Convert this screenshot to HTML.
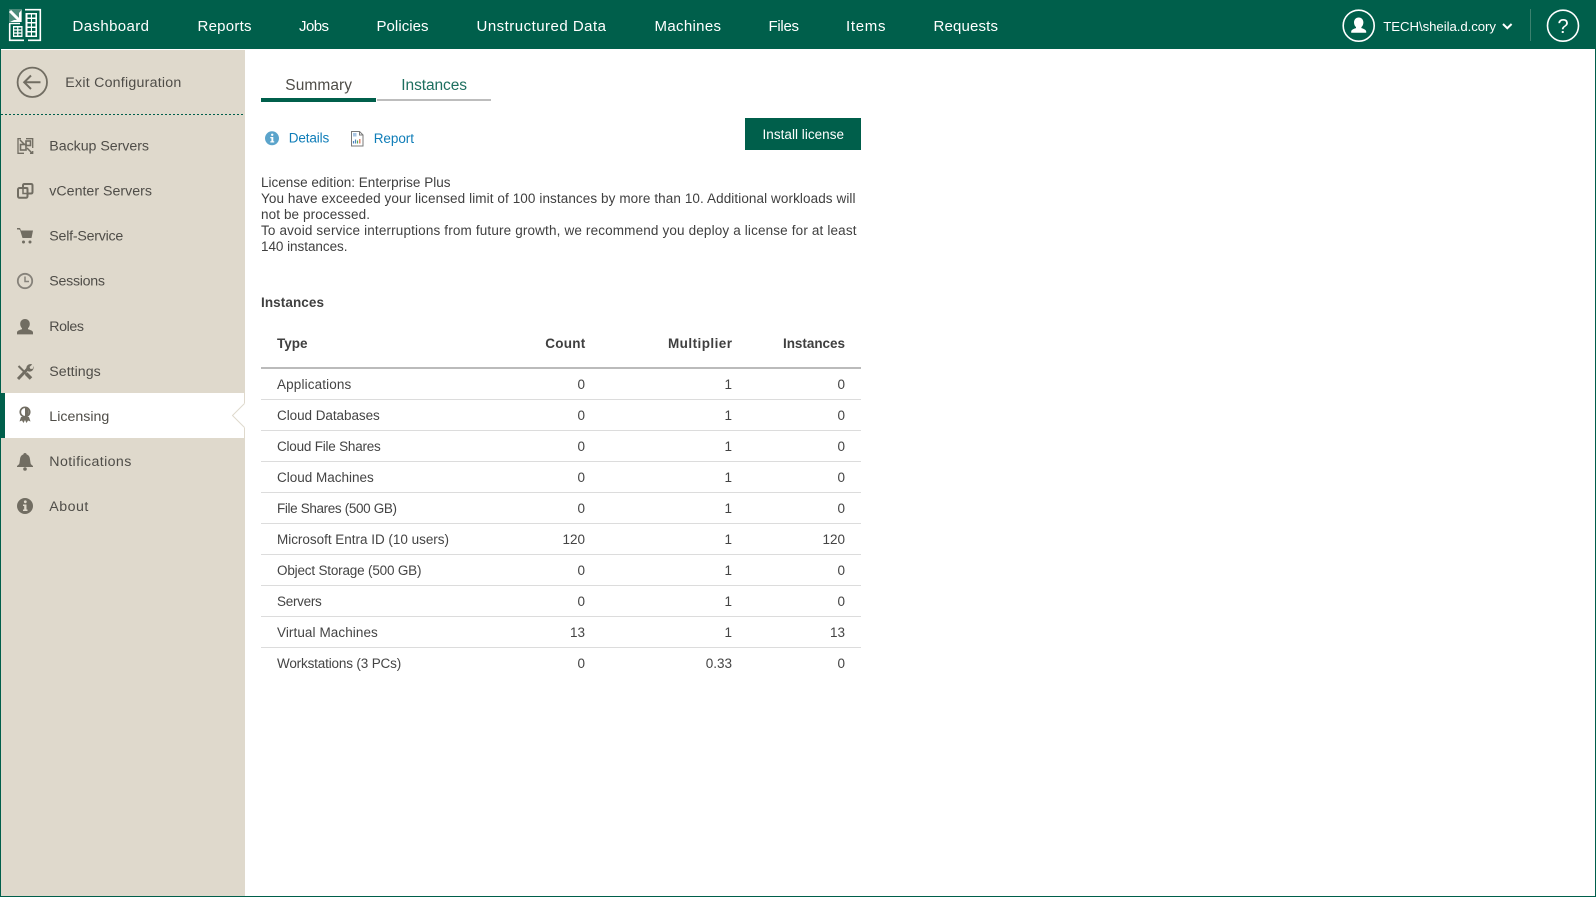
<!DOCTYPE html>
<html lang="en">
<head>
<meta charset="utf-8">
<title>Licensing</title>
<style>
html,body{margin:0;padding:0;width:1596px;height:897px;overflow:hidden;background:#fff}
svg{display:block;position:absolute;left:0;top:0}
text{font-family:"Liberation Sans",Arial,sans-serif;white-space:pre}
.nav{font-size:15px;fill:#fff}
.side{font-size:14.2px;fill:#4f4d48}
.tab{font-size:15.5px}
.lnk{font-size:13.5px;fill:#0f7db8}
.p{font-size:13.5px;fill:#3f3f3f}
.b{font-size:13.5px;font-weight:bold;fill:#3f3f3f}
.c{font-size:13.5px;fill:#444}
.n{font-size:13.5px;fill:#444;text-anchor:end}
.ic{fill:#716d62}
</style>
</head>
<body>
<svg width="1596" height="897" viewBox="0 0 1596 897" xmlns="http://www.w3.org/2000/svg">
<rect width="1596" height="897" fill="#fff"/>
<!-- frame -->
<rect x="0" y="0" width="1596" height="49" fill="#005f4b"/>
<rect x="0" y="49" width="1" height="848" fill="#005f4b"/>
<rect x="1595" y="49" width="1" height="848" fill="#005f4b"/>
<rect x="0" y="896" width="1596" height="1" fill="#005f4b"/>
<!-- sidebar -->
<rect x="1" y="50" width="244" height="846" fill="#dfd9cc"/>
<line x1="1" y1="114.5" x2="245" y2="114.5" stroke="#005f4b" stroke-width="1" stroke-dasharray="2 2"/>
<rect x="0" y="393" width="5" height="45" fill="#005f4b"/>
<rect x="5" y="393" width="239" height="45" fill="#fff"/>
<polygon points="245,403 232.5,415.5 245,428" fill="#fff"/>
<polyline points="244.5,403.5 232.5,415.5 244.5,427.5" fill="none" stroke="#dfd9cc" stroke-width="1"/>

<!-- logo -->
<g>
<rect x="9" y="9" width="13" height="13" fill="#4c8b7b"/>
<path d="M10 11 L19 20" stroke="#fff" stroke-width="3" fill="none"/>
<path d="M21.500 10 V22 H10 L14 20 H19 V13 Z" fill="#fff"/>
<path d="M25 9.7 H40.300 V40.300 H28 M9.700 24 V40.300 H24" fill="none" stroke="#fff" stroke-width="1.600"/>
<path d="M9 23.500 H20" stroke="#fff" stroke-width="1.400"/>
<rect x="25.500" y="13" width="11.500" height="24" fill="#fff"/>
<g fill="#005f4b">
<rect x="27.500" y="14.500" width="3.400" height="3"/><rect x="32" y="14.500" width="3.400" height="3"/>
<rect x="27.500" y="19" width="3.400" height="3"/><rect x="32" y="19" width="3.400" height="3"/>
<rect x="27.500" y="23.500" width="3.400" height="3"/><rect x="32" y="23.500" width="3.400" height="3"/>
<rect x="27.500" y="28" width="3.400" height="3"/><rect x="32" y="28" width="3.400" height="3"/>
<rect x="27.500" y="32.500" width="3.400" height="3"/><rect x="32" y="32.500" width="3.400" height="3"/>
</g>
<rect x="13" y="26" width="9.500" height="11" fill="#fff"/>
<g fill="#005f4b">
<rect x="14.200" y="27.500" width="2.900" height="1.800"/><rect x="18.400" y="27.500" width="2.900" height="1.800"/>
<rect x="14.200" y="30.600" width="2.900" height="1.800"/><rect x="18.400" y="30.600" width="2.900" height="1.800"/>
<rect x="14.200" y="33.700" width="2.900" height="1.800"/><rect x="18.400" y="33.700" width="2.900" height="1.800"/>
</g>
</g>

<!-- top navigation -->
<text class="nav" x="72.500" y="31" textLength="76.500">Dashboard</text>
<text class="nav" x="197.500" y="31" textLength="54">Reports</text>
<text class="nav" x="299" y="31" textLength="30">Jobs</text>
<text class="nav" x="376.500" y="31" textLength="52">Policies</text>
<text class="nav" x="476.500" y="31" textLength="129.500">Unstructured Data</text>
<text class="nav" x="654.500" y="31" textLength="66.500">Machines</text>
<text class="nav" x="768.500" y="31" textLength="30.500">Files</text>
<text class="nav" x="846" y="31" textLength="39.500">Items</text>
<text class="nav" x="933.500" y="31" textLength="64.500">Requests</text>

<!-- user -->
<circle cx="1358.700" cy="25.700" r="15.500" fill="none" stroke="#fff" stroke-width="1.600"/>
<path d="M1358.700 17.500 c-3 0 -4.700 2.300 -4.700 5 c0 2 .9 3.700 2 4.600 v1 c-2.600 .8 -4.800 1.800 -4.800 3.400 v1.300 h15 v-1.300 c0 -1.600 -2.200 -2.600 -4.800 -3.400 v-1 c1.100 -.9 2 -2.600 2 -4.600 c0 -2.700 -1.700 -5 -4.700 -5z" fill="#fff"/>
<text x="1383.300" y="31" font-size="13.200" fill="#fff" textLength="112.700">TECH\sheila.d.cory</text>
<path d="M1503 24 L1507.300 28.200 L1511.600 24" fill="none" stroke="#fff" stroke-width="2"/>
<rect x="1530" y="9" width="1" height="32" fill="#3c826f"/>
<circle cx="1563" cy="25.700" r="15.500" fill="none" stroke="#fff" stroke-width="1.600"/>
<text x="1563" y="33" font-size="20" fill="#fff" text-anchor="middle">?</text>

<!-- exit -->
<circle cx="32.300" cy="82.300" r="14.700" fill="none" stroke="#716d62" stroke-width="1.800"/>
<path d="M40.500 82.300 H24.500 M31 75.500 L24.200 82.300 L31 89" fill="none" stroke="#716d62" stroke-width="2"/>
<text class="side" x="65.300" y="87" textLength="116">Exit Configuration</text>

<!-- sidebar items -->
<text class="side" x="49.300" y="150.700" textLength="99.700">Backup Servers</text>
<text class="side" x="49.300" y="195.700" textLength="102.700">vCenter Servers</text>
<text class="side" x="49.300" y="240.700" textLength="74">Self-Service</text>
<text class="side" x="49.300" y="285.700" textLength="55.700">Sessions</text>
<text class="side" x="49.300" y="331" textLength="34.700">Roles</text>
<text class="side" x="49.300" y="376" textLength="51.400">Settings</text>
<text class="side" x="49.300" y="421" textLength="60">Licensing</text>
<text class="side" x="49.300" y="466" textLength="82">Notifications</text>
<text class="side" x="49.300" y="511" textLength="39">About</text>

<!-- backup servers icon -->
<g fill="none" stroke="#716d62" stroke-width="1.300">
<path d="M21 138.700 H18 V153.300 H24 M26 138.700 H32.700 V148 M32.700 151 V153.300 H30"/>
<rect x="20.500" y="144.500" width="5.500" height="5.500" stroke-width="1.600"/>
<rect x="26" y="141" width="4.500" height="4.500" stroke-width="1.600"/>
<path d="M20 140 L24.500 144.500 M27 148 L32 153" stroke-width="1.500"/>
</g>
<!-- vcenter icon -->
<g fill="none" stroke="#716d62" stroke-width="2">
<path d="M23 188 V185.500 Q23 184 24.500 184 H31 Q32.500 184 32.500 185.500 V192 Q32.500 193.500 31 193.500 H28"/>
<rect x="18" y="188" width="9.500" height="9.800" rx="1.500"/>
<rect x="23" y="188" width="4.500" height="5.500" stroke-width="1.500"/>
</g>
<!-- cart -->
<path class="ic" d="M17 228 H20 L21 230.500 H33 L31.500 238 H22.500 L20 230 L19 229.500 H17 Z"/>
<circle class="ic" cx="23.500" cy="242" r="1.500"/><circle class="ic" cx="30" cy="242" r="1.500"/>
<!-- clock -->
<circle cx="25" cy="281" r="7.200" fill="none" stroke="#86827a" stroke-width="1.800"/>
<path d="M25 276.500 V281.500 H29" fill="none" stroke="#86827a" stroke-width="1.500"/>
<!-- roles -->
<path class="ic" d="M25 319 c-3 0 -4.800 2.200 -4.800 5 c0 1.900 .9 3.400 1.800 4.300 v.9 c-2.800 .8 -5 1.600 -5 3.200 v2 h16 v-2 c0 -1.600 -2.200 -2.400 -5 -3.200 v-.9 c.9 -.9 1.800 -2.400 1.800 -4.300 c0 -2.800 -1.800 -5 -4.800 -5z"/>
<!-- settings -->
<path d="M18.500 366 L26 373.500" stroke="#716d62" stroke-width="2" fill="none"/>
<path d="M26 373.500 L31 378.500" stroke="#716d62" stroke-width="3.600" fill="none"/>
<path d="M18 379 L28 368.500" stroke="#716d62" stroke-width="3" fill="none"/>
<path class="ic" d="M26.500 369.500 C25.800 366 28 364 31 364 L32.200 364.500 L29.500 367 L30.500 369 L32.800 368.800 L33.500 366 C34.300 369 32 372.500 28.500 371.500 Z"/>
<!-- licensing -->
<circle cx="25" cy="412" r="4.700" fill="#fff" stroke="#716d62" stroke-width="1.700"/>
<path class="ic" d="M25 407.500 A4.700 4.700 0 0 1 25 416.700 Z"/>
<path class="ic" d="M21 417 H29 L30.500 421.500 L28 420.500 L26.500 423 L25 420 L23.500 423 L22 420.500 L19.500 421.500 Z"/>
<!-- bell -->
<path class="ic" d="M25 453 c1 0 1.600 .6 1.600 1.400 c2.200 .7 3.200 2.600 3.400 5 l.6 4 c.2 1.200 1.400 1.600 2.400 2.600 v1 h-16 v-1 c1 -1 2.200 -1.400 2.400 -2.600 l.6 -4 c.2 -2.400 1.200 -4.300 3.400 -5 c0 -.8 .6 -1.400 1.600 -1.400z"/>
<circle class="ic" cx="25" cy="469" r="1.800"/>
<!-- about -->
<circle class="ic" cx="25" cy="506" r="8"/>
<circle cx="25.300" cy="501.800" r="1.400" fill="#dfd9cc"/>
<path d="M23 504.500 H26.500 V509.500 H27.500 V511 H23 V509.500 H24.200 V506 H23 Z" fill="#dfd9cc"/>

<!-- tabs -->
<text class="tab" x="285.300" y="90" fill="#4f4d48" textLength="66.700">Summary</text>
<text class="tab" x="401.300" y="90" fill="#1d6f5f" textLength="65.700">Instances</text>
<rect x="261" y="98" width="115" height="4" fill="#005f4b"/>
<rect x="377" y="99" width="114" height="2" fill="#bdbdbd"/>

<!-- details / report -->
<circle cx="272" cy="138.300" r="7" fill="#5ba4cb"/>
<circle cx="272.200" cy="134.800" r="1.200" fill="#fff"/>
<path d="M270.300 137 H273.300 V141.300 H274.200 V142.500 H270.300 V141.300 H271.400 V138.200 H270.300 Z" fill="#fff"/>
<text class="lnk" x="288.700" y="142.700" textLength="40.600">Details</text>
<path d="M351.500 131.500 H359.500 L363 135 V146 H351.500 Z M359.500 131.500 V135 H363" fill="#fff" stroke="#7a7a7a" stroke-width="1"/>
<rect x="353" y="133" width="3.500" height="3.500" fill="#a9c5e3"/>
<path d="M353.500 143.500 V141 M355.500 143.500 V139.500" stroke="#4d84bd" stroke-width="1.200"/>
<path d="M357.500 143.500 V140.500" stroke="#5aa85a" stroke-width="1.200"/>
<path d="M359.800 143.500 V139" stroke="#d9694a" stroke-width="1.200"/>
<text class="lnk" x="373.700" y="143" textLength="40.300">Report</text>

<!-- button -->
<rect x="745" y="118" width="116" height="32" fill="#005f4b"/>
<text x="762.500" y="139" font-size="13.500" fill="#fff" textLength="81.500">Install license</text>

<!-- paragraph -->
<text class="p" x="261" y="187" textLength="189.500">License edition: Enterprise Plus</text>
<text class="p" x="261" y="203" textLength="594.500">You have exceeded your licensed limit of 100 instances by more than 10. Additional workloads will</text>
<text class="p" x="261" y="219" textLength="109">not be processed.</text>
<text class="p" x="261" y="235" textLength="595.500">To avoid service interruptions from future growth, we recommend you deploy a license for at least</text>
<text class="p" x="261" y="251" textLength="86.500">140 instances.</text>

<text class="b" x="261" y="307" textLength="63">Instances</text>

<!-- table head -->
<text class="b" x="277" y="348" textLength="30.500">Type</text>
<text class="b" x="545.300" y="348" textLength="40">Count</text>
<text class="b" x="668" y="348" textLength="64">Multiplier</text>
<text class="b" x="783" y="348" textLength="62">Instances</text>
<rect x="261" y="367" width="600" height="2" fill="#bbb"/>

<!-- separators -->
<g fill="#dcdcdc">
<rect x="261" y="399" width="600" height="1"/>
<rect x="261" y="430" width="600" height="1"/>
<rect x="261" y="461" width="600" height="1"/>
<rect x="261" y="492" width="600" height="1"/>
<rect x="261" y="523" width="600" height="1"/>
<rect x="261" y="554" width="600" height="1"/>
<rect x="261" y="585" width="600" height="1"/>
<rect x="261" y="616" width="600" height="1"/>
<rect x="261" y="647" width="600" height="1"/>
</g>

<!-- rows -->
<text class="c" x="277" y="389" textLength="74.300">Applications</text>
<text class="n" x="585" y="389">0</text><text class="n" x="732" y="389">1</text><text class="n" x="845" y="389">0</text>
<text class="c" x="277" y="420" textLength="102.800">Cloud Databases</text>
<text class="n" x="585" y="420">0</text><text class="n" x="732" y="420">1</text><text class="n" x="845" y="420">0</text>
<text class="c" x="277" y="451" textLength="103.800">Cloud File Shares</text>
<text class="n" x="585" y="451">0</text><text class="n" x="732" y="451">1</text><text class="n" x="845" y="451">0</text>
<text class="c" x="277" y="482" textLength="96.700">Cloud Machines</text>
<text class="n" x="585" y="482">0</text><text class="n" x="732" y="482">1</text><text class="n" x="845" y="482">0</text>
<text class="c" x="277" y="513" textLength="120">File Shares (500 GB)</text>
<text class="n" x="585" y="513">0</text><text class="n" x="732" y="513">1</text><text class="n" x="845" y="513">0</text>
<text class="c" x="277" y="544" textLength="172">Microsoft Entra ID (10 users)</text>
<text class="n" x="585" y="544">120</text><text class="n" x="732" y="544">1</text><text class="n" x="845" y="544">120</text>
<text class="c" x="277" y="575" textLength="144.500">Object Storage (500 GB)</text>
<text class="n" x="585" y="575">0</text><text class="n" x="732" y="575">1</text><text class="n" x="845" y="575">0</text>
<text class="c" x="277" y="606" textLength="44.800">Servers</text>
<text class="n" x="585" y="606">0</text><text class="n" x="732" y="606">1</text><text class="n" x="845" y="606">0</text>
<text class="c" x="277" y="637" textLength="100.800">Virtual Machines</text>
<text class="n" x="585" y="637">13</text><text class="n" x="732" y="637">1</text><text class="n" x="845" y="637">13</text>
<text class="c" x="277" y="668" textLength="124.200">Workstations (3 PCs)</text>
<text class="n" x="585" y="668">0</text><text class="n" x="732" y="668">0.33</text><text class="n" x="845" y="668">0</text>
</svg>
</body>
</html>
